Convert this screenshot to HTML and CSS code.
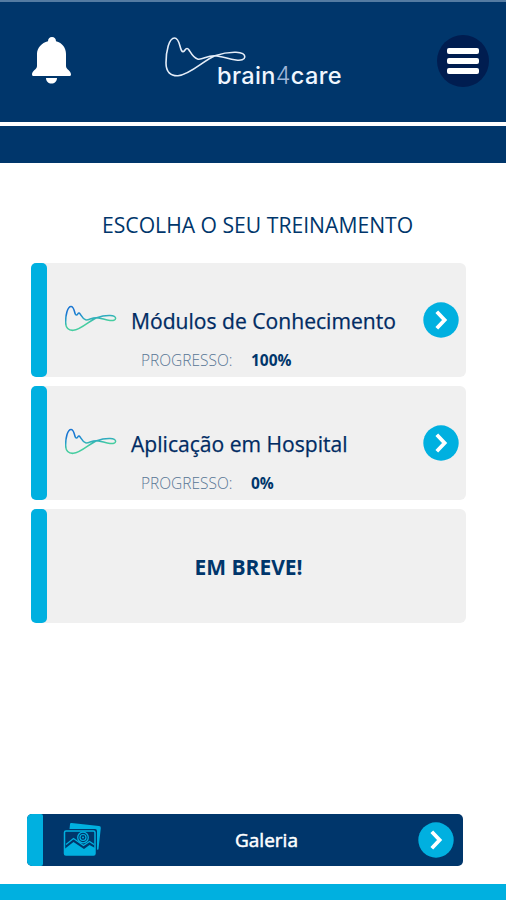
FILE: index.html
```html
<!DOCTYPE html>
<html lang="pt-BR">
<head>
<meta charset="utf-8">
<title>brain4care</title>
<link rel="stylesheet" href="styles.css">
</head>
<body>
<svg class="defs" width="0" height="0" aria-hidden="true">
  <linearGradient id="wave" gradientUnits="userSpaceOnUse" x1="26" y1="16" x2="29" y2="36">
    <stop offset="0" stop-color="#1976d2"/><stop offset=".5" stop-color="#269fc9"/><stop offset="1" stop-color="#45cda0"/>
  </linearGradient>
  <symbol id="curve" viewBox="5 6 82 42">
    <path d="M55 25.700C47 25.200 42 30.500 37.500 29C33 27.500 31 23 29 20Q27 17 25 20Q23 23 21.500 20.500C19.500 17 19.500 8 14.500 8C9 8 6 21 6 33C6 42 10.500 46 18 45.700C30 45 44 30 55 25.700C62 23.200 69 22 76 22.200C82 22.400 85 24.200 84.800 27C84.500 29.800 81 30.600 76 30C68 29 62 26.200 55 25.700Z"/>
  </symbol>
  <symbol id="next" viewBox="0 0 36 36">
    <circle cx="18" cy="18" r="17.700" fill="#00b0e0"/>
    <path d="M13.800 9.800L21.600 18L13.800 26.200" fill="none" stroke="#fff" stroke-width="3.800"/>
  </symbol>
</svg>
<header class="header">
  <svg class="bell" viewBox="0 0 40 47"><path d="M20 0C22.500 0 24 1.600 24 4.300C30.500 6 34 11 34 17V29C34 32.500 39 33.500 39 37.500Q39 39 37.500 39H1.500Q0 39 0 37.500C0 33.500 5 32.500 5 29V17C5 11 9.500 6 16 4.300C16 1.600 17.500 0 20 0ZM14 41H25C25 44.500 22.500 46.500 19.500 46.500C16.500 46.500 14 44.500 14 41Z" fill="#fff"/></svg>
  <div class="logo">
    <svg class="logo-curve"><use href="#curve"/></svg>
    <span class="logo-name">brain<i>4</i>care</span>
  </div>
  <div class="menu"><span></span><span></span><span></span></div>
</header>
<div class="strip"></div>
<main class="main">
  <h1>ESCOLHA O SEU TREINAMENTO</h1>
  <section class="cards">
    <article class="card">
      <svg class="card-curve"><use href="#curve"/></svg>
      <div class="info">
        <h2>Módulos de Conhecimento</h2>
        <p><span class="label">PROGRESSO:</span><b>100%</b></p>
      </div>
      <svg class="next"><use href="#next"/></svg>
    </article>
    <article class="card">
      <svg class="card-curve"><use href="#curve"/></svg>
      <div class="info">
        <h2>Aplicação em Hospital</h2>
        <p><span class="label">PROGRESSO:</span><b>0%</b></p>
      </div>
      <svg class="next"><use href="#next"/></svg>
    </article>
    <article class="card soon"><strong>EM BREVE!</strong></article>
  </section>
  <div class="gallery">
    <svg class="photos" viewBox="0 0 40 36">
      <path d="M7 2.200Q7 .8 8.500 1L36 4Q38 4.200 37.800 6L35.500 27Q35.300 28 34 27.500V9Q34 7 32 7H6.500Z" fill="#00b0e0"/>
      <rect x="1.500" y="9" width="30.500" height="24" rx="1.500" fill="#00366b" stroke="#00b0e0" stroke-width="1.500"/>
      <path d="M1.500 27L10.500 20L21 27L26.500 23L32 26V33H1.500Z" fill="#00b0e0"/>
      <path d="M3 22.500L10.500 16.500L20.500 23.500L26.500 19.500L31 22.500" fill="none" stroke="#00b0e0" stroke-width="1.200"/>
      <circle cx="20" cy="15.500" r="5.300" fill="#00366b" stroke="#00b0e0" stroke-width="1.300"/>
      <circle cx="20" cy="15.500" r="3" fill="none" stroke="#00b0e0" stroke-width="1.200"/>
      <circle cx="20" cy="15.500" r="1" fill="#00b0e0"/>
    </svg>
    <span class="gallery-name">Galeria</span>
    <svg class="next"><use href="#next"/></svg>
  </div>
</main>
<footer class="footer"></footer>
</body>
</html>
```
FILE: styles.css
```css
* { box-sizing: border-box; }
body { margin: 0; height: 900px; display: flex; flex-direction: column; background: #fff; color: #00366b; font-family: "Open Sans", sans-serif; overflow: hidden; }
h1, h2, p { margin: 0; font-weight: 400; white-space: nowrap; }
svg { display: block; flex: none; }
.defs { position: absolute; }
.header { height: 122px; flex: none; display: flex; align-items: flex-start; background: #00366b; border-top: 2px solid #547ba2; padding: 34px 17px 0 32px; }
.bell { width: 40px; height: 47px; margin-top: 1px; }
.logo { width: 182px; margin-left: 93px; display: flex; flex-direction: column; }
.logo-curve { width: 82px; height: 42px; fill: none; stroke: #e4edf8; stroke-width: 1.6; }
.logo-name { margin: -17px 0 0 52px; font: 500 23.500px/30px Inter, sans-serif; letter-spacing: .35px; color: #f0f6ff; }
.logo-name i { font-style: normal; font-weight: 300; color: #9fb5d8; }
.menu { width: 52px; height: 52px; margin: -1px 0 0 auto; border-radius: 50%; background: #001d50; display: flex; flex-direction: column; align-items: center; justify-content: center; gap: 4px; }
.menu span { width: 32px; height: 6px; border-radius: 2px; background: #fff; }
.strip { height: 37px; flex: none; margin-top: 4px; background: #00366b; }
.main { flex: 1; display: flex; flex-direction: column; padding: 47px 40px 18px 31px; }
h1 { width: 312px; margin-left: 71px; font-size: 21.150px; line-height: 30px; }
.cards { margin-top: 23px; display: flex; flex-direction: column; gap: 9px; }
.card { height: 114px; display: flex; background: #f0f0f0; border-radius: 6px; padding-right: 8px; }
.card::before { content: ""; flex: none; width: 16px; background: #00b0e0; border-radius: 5px; }
.card-curve { width: 52px; height: 27px; margin: 42px 0 0 18px; fill: none; stroke: url(#wave); stroke-width: 2.4; }
.info { flex: 1; margin: 43px 0 0 14px; }
h2 { font-size: 21.100px; line-height: 30px; color: #002b63; -webkit-text-stroke: .25px #002b63; }
.info p { display: flex; font-size: 15.500px; line-height: 22px; margin: 13px 0 0 10px; }
.label { width: 110px; color: #587695; font-weight: 300; }
.card .next { margin: 39px -1px 0 0; }
.next { width: 36px; height: 36px; }
.soon { padding-right: 16px; font-size: 21px; line-height: 116px; }
.soon strong { flex: 1; text-align: center; }
.gallery { height: 52px; width: 436px; margin: auto 0 0 -4px; display: flex; align-items: center; background: #00366b; border-radius: 5px; padding-right: 9px; }
.gallery::before { content: ""; flex: none; align-self: stretch; width: 16px; background: #00b0e0; border-radius: 5px 2px 2px 5px; }
.photos { width: 40px; height: 36px; margin-left: 20px; }
.gallery-name { flex: 1; padding-left: 132px; font-size: 19px; font-weight: 500; color: #fff; -webkit-text-stroke: .5px #fff; }
.footer { height: 16px; flex: none; background: #00b0e0; }
```
